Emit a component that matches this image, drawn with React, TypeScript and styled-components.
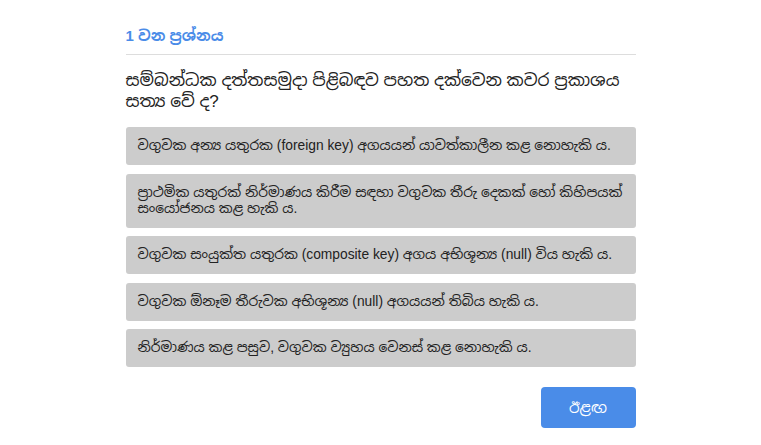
import React from "react";
import styled, { createGlobalStyle } from "styled-components";

const FONT = `"Liberation Sans", "Noto Sans Sinhala", Arial, sans-serif`;

const Global = createGlobalStyle`
  html, body { margin: 0; padding: 0; background: #ffffff; }
  body { font-family: ${FONT}; color: #222; }
`;

const Card = styled.div`
  width: 510px;
  margin: 0 auto;
  padding-top: 27px;
`;

const Header = styled.div`
  color: #4a8ce8;
  font-size: 15px;
  line-height: 18px;
  font-weight: bold;
  padding-bottom: 9px;
  border-bottom: 1px solid #dddddd;
`;

const Question = styled.div`
  font-size: 17px;
  line-height: 21px;
  margin: 15px 0 15px;
  padding-right: 8px;
  color: #222;
`;

const Options = styled.div`
  display: flex;
  flex-direction: column;
  gap: 8.5px;
`;

const Option = styled.div`
  background: #cccccc;
  border-radius: 3px;
  padding: 11px 12px;
  font-size: 13.8px;
  line-height: 16px;
  color: #222;
  cursor: pointer;
`;

const Footer = styled.div`
  display: flex;
  justify-content: flex-end;
  margin-top: 20px;
`;

const NextButton = styled.button`
  width: 95px;
  height: 41px;
  border: none;
  border-radius: 4px;
  background: #4a8ce8;
  color: #ffffff;
  font-family: ${FONT};
  font-size: 15px;
`;

const options = [
  "වගුවක අන්‍ය යතුරක (foreign key) අගයයන් යාවත්කාලීන කළ නොහැකි ය.",
  "ප්‍රාථමික යතුරක් නිර්මාණය කිරීම සඳහා වගුවක තීරු දෙකක් හෝ කිහිපයක් සංයෝජනය කළ හැකි ය.",
  "වගුවක සංයුක්ත යතුරක (composite key) අගය අභිශූන්‍ය (null) විය හැකි ය.",
  "වගුවක ඕනෑම තීරුවක අභිශූන්‍ය (null) අගයයන් තිබිය හැකි ය.",
  "නිර්මාණය කළ පසුව, වගුවක ව්‍යුහය වෙනස් කළ නොහැකි ය.",
];

export default function App() {
  return (
    <>
      <Global />
      <Card>
        <Header>1 වන ප්‍රශ්නය</Header>
        <Question>
          සම්බන්ධක දත්තසමුදා පිළිබඳව පහත දක්වෙන කවර ප්‍රකාශය සත්‍ය වේ ද?
        </Question>
        <Options>
          {options.map((o) => (
            <Option key={o}>{o}</Option>
          ))}
        </Options>
        <Footer>
          <NextButton>ඊළඟ</NextButton>
        </Footer>
      </Card>
    </>
  );
}
